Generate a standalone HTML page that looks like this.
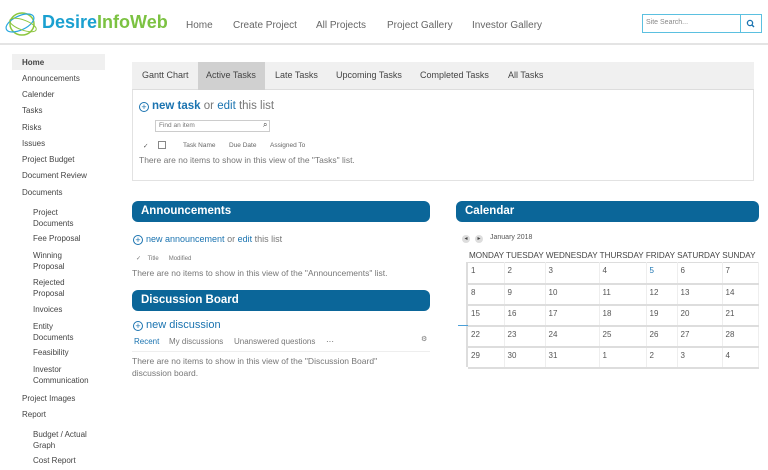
<!DOCTYPE html>
<html><head><meta charset="utf-8"><style>
*{margin:0;padding:0;box-sizing:border-box}
body{width:768px;height:470px;overflow:hidden;background:#fff;font-family:"Liberation Sans",sans-serif;color:#444;position:relative}
.a{position:absolute;white-space:nowrap}
.hdr{position:absolute;left:0;top:0;width:768px;height:45px;border-bottom:2px solid #e4e4e4;background:#fff}
.nav{font-size:10px;color:#666;top:20px}
.side{font-size:8px;color:#444}
.bar{position:absolute;background:#0b6699;color:#fff;font-weight:bold;font-size:11.5px;border-radius:6px;padding:0 9px;height:21px;line-height:21px}
.blue{color:#1a73b0}
.g{color:#777}
.cal td{border-right:1px solid #eee;border-bottom:2px solid #ddd;vertical-align:top;font-size:8px;color:#555;padding:3px 0 0 3px;height:21px}
</style></head><body>
<div class="hdr"></div>
<svg class="a" style="left:3px;top:8px" width="38" height="32" viewBox="0 0 38 32"><ellipse cx="19" cy="16" rx="12" ry="11" fill="none" stroke="#8cc63f" stroke-width="1.5"/><ellipse cx="17" cy="15" rx="15" ry="7" fill="none" stroke="#29a8e0" stroke-width="1.2" transform="rotate(-25 17 15)"/><ellipse cx="20" cy="17" rx="14" ry="5" fill="none" stroke="#8cc63f" stroke-width="1" transform="rotate(20 20 17)"/></svg>
<div class="a" style="left:42px;top:12px;font-size:18px;font-weight:bold"><span style="color:#1aa0d0">Desire</span><span style="color:#7cc242">InfoWeb</span></div>
<div class="a nav" style="left:186px">Home</div>
<div class="a nav" style="left:233px">Create Project</div>
<div class="a nav" style="left:316px">All Projects</div>
<div class="a nav" style="left:387px">Project Gallery</div>
<div class="a nav" style="left:472px">Investor Gallery</div>
<div class="a" style="left:642px;top:14px;width:120px;height:19px;border:1px solid #5bc0e0;font-size:7px;color:#888;padding:4px 3px">Site Search...</div>
<div class="a" style="left:740px;top:14px;width:1px;height:19px;background:#5bc0e0"></div>
<svg class="a" style="left:746px;top:19px" width="9" height="9" viewBox="0 0 9 9"><circle cx="4" cy="4" r="2.6" fill="none" stroke="#1a73b0" stroke-width="1.3"/><line x1="6" y1="6" x2="8" y2="8" stroke="#1a73b0" stroke-width="1.4"/></svg>

<div class="a" style="left:12px;top:54px;width:93px;height:16px;background:#f0f0f0"></div>
<div class="a side" style="left:22px;top:58px;font-weight:bold">Home</div>
<div class="a side" style="left:22px;top:74px">Announcements</div>
<div class="a side" style="left:22px;top:90px">Calender</div>
<div class="a side" style="left:22px;top:106px">Tasks</div>
<div class="a side" style="left:22px;top:123px">Risks</div>
<div class="a side" style="left:22px;top:139px">Issues</div>
<div class="a side" style="left:22px;top:155px">Project Budget</div>
<div class="a side" style="left:22px;top:171px">Document Review</div>
<div class="a side" style="left:22px;top:188px">Documents</div>
<div class="a side" style="left:33px;top:207px;line-height:11px">Project<br>Documents</div>
<div class="a side" style="left:33px;top:234px">Fee Proposal</div>
<div class="a side" style="left:33px;top:250px;line-height:11px">Winning<br>Proposal</div>
<div class="a side" style="left:33px;top:277px;line-height:11px">Rejected<br>Proposal</div>
<div class="a side" style="left:33px;top:305px">Invoices</div>
<div class="a side" style="left:33px;top:321px;line-height:11px">Entity<br>Documents</div>
<div class="a side" style="left:33px;top:348px">Feasibility</div>
<div class="a side" style="left:33px;top:364px;line-height:11px">Investor<br>Communication</div>
<div class="a side" style="left:22px;top:394px">Project Images</div>
<div class="a side" style="left:22px;top:410px">Report</div>
<div class="a side" style="left:33px;top:429px;line-height:11px">Budget / Actual<br>Graph</div>
<div class="a side" style="left:33px;top:456px">Cost Report</div>

<div class="a" style="left:132px;top:62px;width:622px;height:119px;border:1px solid #e2e2e2"></div>
<div class="a" style="left:132px;top:62px;width:622px;height:28px;background:#f0f0f0;border-bottom:1px solid #ddd"></div>
<div class="a" style="left:198px;top:62px;width:67px;height:28px;background:#d0d0d0"></div>
<div class="a" style="left:142px;top:70px;font-size:9px;color:#444">Gantt Chart</div>
<div class="a" style="left:206px;top:70px;font-size:9px;color:#444">Active Tasks</div>
<div class="a" style="left:275px;top:70px;font-size:9px;color:#444">Late Tasks</div>
<div class="a" style="left:336px;top:70px;font-size:9px;color:#444">Upcoming Tasks</div>
<div class="a" style="left:420px;top:70px;font-size:9px;color:#444">Completed Tasks</div>
<div class="a" style="left:508px;top:70px;font-size:9px;color:#444">All Tasks</div>
<div class="a" style="left:139px;top:102px;width:10px;height:10px;border:1px solid #1a73b0;border-radius:50%;font-size:9px;line-height:8px;text-align:center;color:#1a73b0">+</div>
<div class="a" style="left:152px;top:100px;font-size:11.5px"><b class="blue">new task</b> <span class="g">or</span> <span class="blue">edit</span> <span class="g">this list</span></div>
<div class="a" style="left:155px;top:120px;width:115px;height:12px;border:1px solid #ccc;font-size:6.5px;color:#777;padding:1px 3px">Find an item</div>
<div class="a" style="left:263px;top:120px;font-size:8px;color:#333">&#8981;</div>
<div class="a" style="left:143px;top:142px;font-size:6.5px;color:#555">✓</div>
<div class="a" style="left:158px;top:141px;width:8px;height:8px;border:1px solid #888"></div>
<div class="a" style="left:183px;top:142px;font-size:6.5px;color:#666">Task Name</div>
<div class="a" style="left:229px;top:142px;font-size:6.5px;color:#666">Due Date</div>
<div class="a" style="left:270px;top:142px;font-size:6.5px;color:#666">Assigned To</div>
<div class="a" style="left:139px;top:155px;font-size:8.5px;color:#777">There are no items to show in this view of the "Tasks" list.</div>

<div class="bar" style="left:132px;top:201px;width:298px">Announcements</div>
<div class="a" style="left:133px;top:235px;width:10px;height:10px;border:1px solid #1a73b0;border-radius:50%;font-size:9px;line-height:8px;text-align:center;color:#1a73b0">+</div>
<div class="a" style="left:146px;top:234px;font-size:9px"><span class="blue">new announcement</span> <span class="g">or</span> <span class="blue">edit</span> <span class="g">this list</span></div>
<div class="a" style="left:136px;top:255px;font-size:6px;color:#777">✓ &nbsp;&nbsp; Title &nbsp;&nbsp;&nbsp;&nbsp; Modified</div>
<div class="a" style="left:132px;top:268px;font-size:8.5px;color:#777">There are no items to show in this view of the "Announcements" list.</div>

<div class="bar" style="left:132px;top:290px;width:298px">Discussion Board</div>
<div class="a" style="left:133px;top:321px;width:10px;height:10px;border:1px solid #1a73b0;border-radius:50%;font-size:9px;line-height:8px;text-align:center;color:#1a73b0">+</div>
<div class="a" style="left:146px;top:319px;font-size:11px" ><span class="blue">new discussion</span></div>
<div class="a" style="left:134px;top:337px;font-size:8px;color:#1a73b0">Recent</div>
<div class="a" style="left:169px;top:337px;font-size:8px;color:#777">My discussions</div>
<div class="a" style="left:234px;top:337px;font-size:8px;color:#777">Unanswered questions</div>
<div class="a" style="left:326px;top:337px;font-size:8px;color:#555">···</div>
<div class="a" style="left:421px;top:335px;font-size:7px;color:#777">⚙</div>
<div class="a" style="left:132px;top:351px;width:298px;height:1px;background:#eee"></div>
<div class="a" style="left:132px;top:355px;font-size:8.5px;color:#777;line-height:12px">There are no items to show in this view of the "Discussion Board"<br>discussion board.</div>

<div class="bar" style="left:456px;top:201px;width:303px">Calendar</div>
<div class="a" style="left:462px;top:235px;width:8px;height:8px;border-radius:50%;background:#ddd;font-size:6px;line-height:8px;text-align:center">◂</div>
<div class="a" style="left:475px;top:235px;width:8px;height:8px;border-radius:50%;background:#ddd;font-size:6px;line-height:8px;text-align:center">▸</div>
<div class="a" style="left:490px;top:234px;font-size:7px;color:#555">January 2018</div>
<div class="a" style="left:469px;top:251px;font-size:8.15px;color:#444">MONDAY TUESDAY WEDNESDAY THURSDAY FRIDAY SATURDAY SUNDAY</div>
<div class="a" style="left:466px;top:262px;width:2px;height:105px;background:#ddd"></div>
<div class="a" style="left:458px;top:325px;width:10px;height:1px;background:#4a9fd8"></div>
<div class="a" style="left:646px;top:262px;width:31px;height:1px;background:#4a9fd8"></div>
<table class="cal a" style="left:468px;top:262px;width:290px;border-collapse:collapse;table-layout:fixed;border-top:1px solid #ddd">
<colgroup><col style="width:36px"><col style="width:41px"><col style="width:54px"><col style="width:47px"><col style="width:31px"><col style="width:45px"><col style="width:36px"></colgroup>
<tr><td>1</td><td>2</td><td>3</td><td>4</td><td style="color:#1a73b0">5</td><td>6</td><td>7</td></tr>
<tr><td>8</td><td>9</td><td>10</td><td>11</td><td>12</td><td>13</td><td>14</td></tr>
<tr><td>15</td><td>16</td><td>17</td><td>18</td><td>19</td><td>20</td><td>21</td></tr>
<tr><td>22</td><td>23</td><td>24</td><td>25</td><td>26</td><td>27</td><td>28</td></tr>
<tr><td>29</td><td>30</td><td>31</td><td>1</td><td>2</td><td>3</td><td>4</td></tr>
</table>
</body></html>
